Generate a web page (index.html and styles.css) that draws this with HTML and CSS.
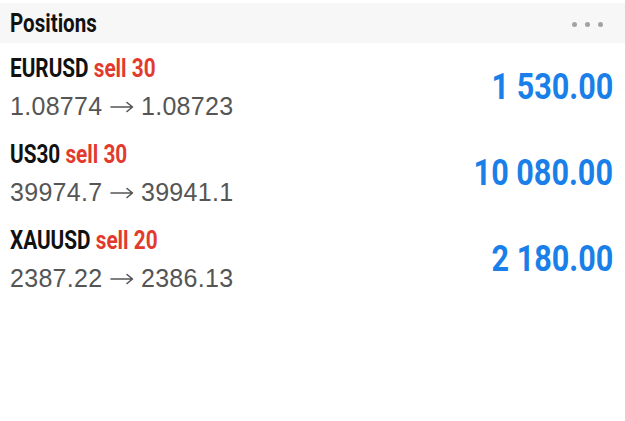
FILE: index.html
```
<!DOCTYPE html>
<html>
<head>
<meta charset="utf-8">
<link rel="stylesheet" href="styles.css">
</head>
<body>
<div class="panel">
  <div class="header">
    <span class="header-title">Positions</span>
    <span class="dots"><i></i><i></i><i></i></span>
  </div>
  <div class="list">
    <div class="row">
      <div class="info">
        <div class="title"><span class="sym">EURUSD</span> <span class="side">sell 30</span></div>
        <div class="prices">1.08774 <svg class="arrow" viewBox="0 0 24 12" width="24" height="12"><path d="M1 6H22.5M17 1.5L22.5 6L17 10.5"/></svg> 1.08723</div>
      </div>
      <div class="profit">1 530.00</div>
    </div>
    <div class="row">
      <div class="info">
        <div class="title"><span class="sym">US30</span> <span class="side">sell 30</span></div>
        <div class="prices">39974.7 <svg class="arrow" viewBox="0 0 24 12" width="24" height="12"><path d="M1 6H22.5M17 1.5L22.5 6L17 10.5"/></svg> 39941.1</div>
      </div>
      <div class="profit">10 080.00</div>
    </div>
    <div class="row">
      <div class="info">
        <div class="title"><span class="sym">XAUUSD</span> <span class="side">sell 20</span></div>
        <div class="prices">2387.22 <svg class="arrow" viewBox="0 0 24 12" width="24" height="12"><path d="M1 6H22.5M17 1.5L22.5 6L17 10.5"/></svg> 2386.13</div>
      </div>
      <div class="profit">2 180.00</div>
    </div>
  </div>
</div>
</body>
</html>
```
FILE: styles.css
```
html, body {
  margin: 0;
  padding: 0;
  background: #ffffff;
}
.panel {
  width: 625px;
  padding-top: 3px;
}
.header {
  height: 40px;
  background: #f7f7f7;
  display: flex;
  align-items: center;
  justify-content: space-between;
  padding: 0 22px 0 10px;
}
.header-title {
  display: inline-block;
  font-family: Roboto, sans-serif;
  font-weight: 700;
  font-size: 26px;
  line-height: 40px;
  color: #111111;
  transform: scaleX(0.79);
  transform-origin: left center;
}
.dots {
  display: flex;
  gap: 8px;
  margin-top: 2px;
}
.dots i {
  display: block;
  width: 5px;
  height: 5px;
  border-radius: 50%;
  background: #a3a3a3;
}
.list {
  display: flex;
  flex-direction: column;
}
.row {
  display: flex;
  align-items: center;
  justify-content: space-between;
  padding: 11px 12px 8px 10px;
}
.title {
  display: inline-block;
  font-family: Roboto, sans-serif;
  font-weight: 700;
  font-size: 25px;
  line-height: 30px;
  white-space: nowrap;
  transform: scaleX(0.83);
  transform-origin: left center;
}
.sym {
  color: #111111;
}
.side {
  color: #e23b2e;
}
.prices {
  margin-top: 7px;
  font-family: "Liberation Sans", Arial, sans-serif;
  font-size: 25px;
  line-height: 30px;
  letter-spacing: 0.3px;
  color: #555555;
  white-space: nowrap;
}
.arrow {
  vertical-align: 2px;
  fill: none;
  stroke: #555555;
  stroke-width: 1.6;
  stroke-linecap: round;
  stroke-linejoin: round;
}
.profit {
  font-family: Roboto, sans-serif;
  font-weight: 700;
  font-size: 36px;
  line-height: 40px;
  color: #1a7fe8;
  white-space: nowrap;
  transform: scaleX(0.85);
  transform-origin: right center;
  margin-bottom: 2px;
}
```
